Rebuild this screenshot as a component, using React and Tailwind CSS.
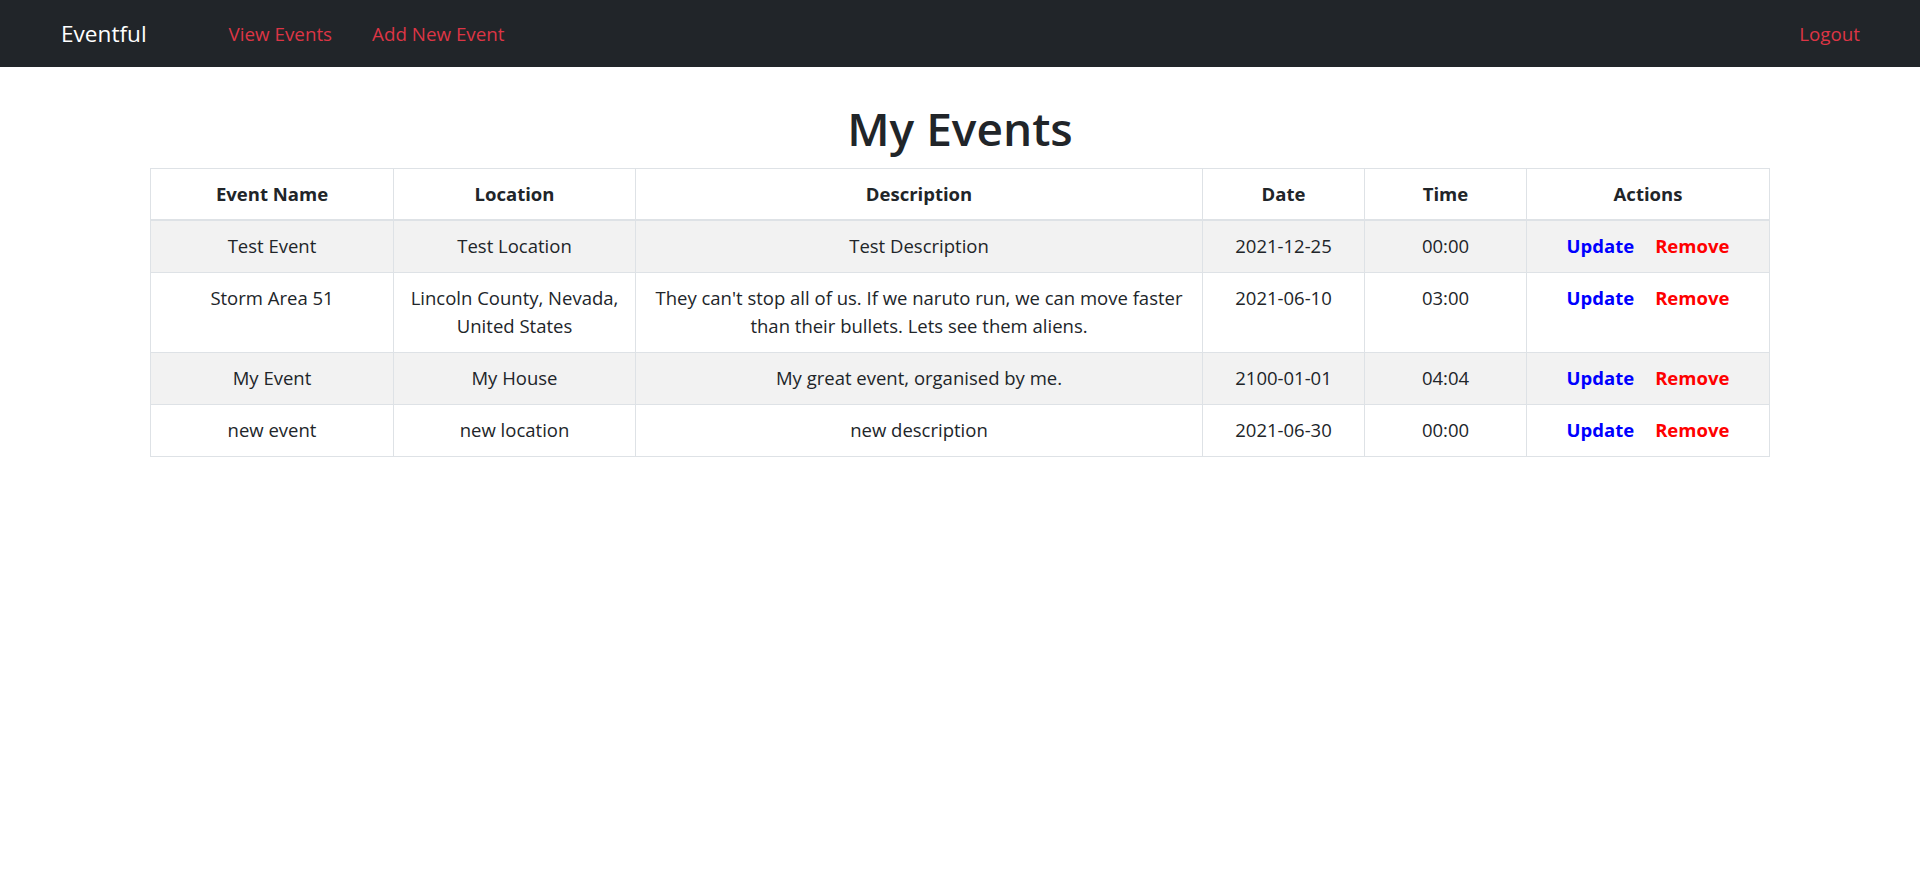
import React from "react";

const rows = [
  { name: "Test Event", loc: ["Test Location"], desc: ["Test Description"], date: "2021-12-25", time: "00:00" },
  { name: "Storm Area 51", loc: ["Lincoln County, Nevada,", "United States"], desc: ["They can't stop all of us. If we naruto run, we can move faster", "than their bullets. Lets see them aliens."], date: "2021-06-10", time: "03:00" },
  { name: "My Event", loc: ["My House"], desc: ["My great event, organised by me."], date: "2100-01-01", time: "04:04" },
  { name: "new event", loc: ["new location"], desc: ["new description"], date: "2021-06-30", time: "00:00" },
];

function Lines({ lines }) {
  return lines.map((l, i) => (
    <React.Fragment key={i}>
      {i > 0 && <br />}
      {l}
    </React.Fragment>
  ));
}

export default function App() {
  const td = "px-[11px] py-[11px] leading-[28.8px] align-top text-center border-t border-l border-[#dee2e6] first:border-l-0";
  const th = "px-[11px] pt-[11px] pb-[10px] leading-[28.8px] text-center font-bold border-l border-b-2 border-[#dee2e6] first:border-l-0";
  return (
    <div className="min-h-[892px] bg-white text-[#212529]" style={{ fontFamily: '"Open Sans", "Noto Sans", sans-serif' }}>
      <nav className="h-[67px] bg-[#212529] flex items-center pl-[61px] pr-[60px] pt-[2px]">
        <span className="text-[22.6px] text-white leading-none">Eventful</span>
        <a className="ml-[82px] text-[18.8px] text-[#dc3545] leading-none">View Events</a>
        <a className="ml-[40px] text-[18.8px] text-[#dc3545] leading-none">Add New Event</a>
        <a className="ml-auto text-[18.8px] text-[#dc3545] leading-none">Logout</a>
      </nav>
      <h1 className="mt-[33px] mb-[12px] text-center text-[46px] leading-[56px] font-semibold">My Events</h1>
      <div className="mx-[150px]">
        <table className="w-full table-fixed border-collapse border border-[#dee2e6] text-[18.5px]">
          <colgroup>
            <col className="w-[243px]" />
            <col className="w-[242px]" />
            <col className="w-[567px]" />
            <col className="w-[162px]" />
            <col className="w-[162px]" />
            <col className="w-[243px]" />
          </colgroup>
          <thead>
            <tr>
              <th className={th}>Event Name</th>
              <th className={th}>Location</th>
              <th className={th}>Description</th>
              <th className={th}>Date</th>
              <th className={th}>Time</th>
              <th className={th}>Actions</th>
            </tr>
          </thead>
          <tbody>
            {rows.map((r, i) => (
              <tr key={i} className={i % 2 === 0 ? "bg-[#f2f2f2]" : "bg-white"}>
                <td className={td}>{r.name}</td>
                <td className={td}><Lines lines={r.loc} /></td>
                <td className={td + " whitespace-nowrap"}><Lines lines={r.desc} /></td>
                <td className={td}>{r.date}</td>
                <td className={td}>{r.time}</td>
                <td className={td}>
                  <span className="inline-flex gap-[21px] font-bold">
                    <a className="text-[#0000ff]">Update</a>
                    <a className="text-[#ff0000]">Remove</a>
                  </span>
                </td>
              </tr>
            ))}
          </tbody>
        </table>
      </div>
    </div>
  );
}
